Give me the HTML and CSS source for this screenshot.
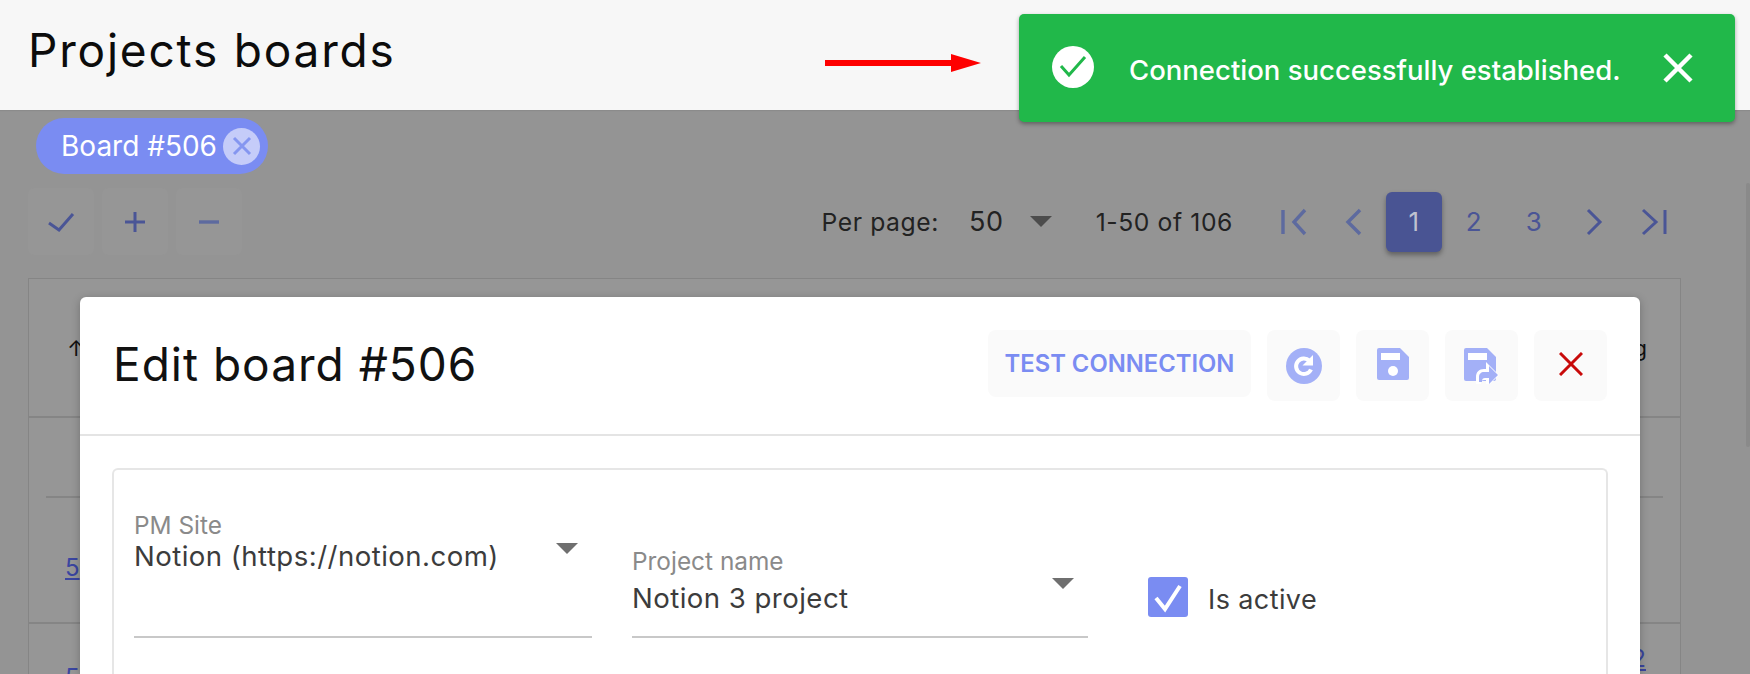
FILE: index.html
```html
<!DOCTYPE html>
<html lang="en">
<head>
<meta charset="utf-8">
<title>Projects boards</title>
<link rel="stylesheet" href="styles.css">
</head>
<body>
<header class="page-header"><h1 class="page-title">Projects boards</h1></header>
<main class="page-main">
  <div class="chips">
    <span class="chip">Board #506
      <span class="chip-x"><svg viewBox="0 0 24 24" width="24" height="24"><path d="M4 4l16 16M20 4L4 20" class="chip-x-path"/></svg></span>
    </span>
  </div>
  <div class="toolbar">
    <div class="tool-group">
      <button class="tool-btn"><svg viewBox="0 0 30 30" width="30" height="30"><path d="M3 16l10 7L27 7" class="stroke"/></svg></button>
      <button class="tool-btn"><svg viewBox="0 0 30 30" width="30" height="30"><path d="M15 5v20M5 15h20" class="stroke"/></svg></button>
      <button class="tool-btn"><svg viewBox="0 0 30 30" width="30" height="30"><path d="M5 15h20" class="stroke faint"/></svg></button>
    </div>
    <div class="pager">
      <span class="per-label">Per page:</span>
      <span class="per-value">50</span>
      <span class="caret caret-dark"></span>
      <span class="range">1-50 of 106</span>
      <span class="pg"><svg viewBox="0 0 30 30" width="30" height="30"><path d="M4 3v24M26 3L15 15l11 12" class="stroke faint"/></svg></span>
      <span class="pg"><svg viewBox="0 0 30 30" width="30" height="30"><path d="M21 3L9 15l12 12" class="stroke faint"/></svg></span>
      <span class="pg pg-on">1</span>
      <span class="pg">2</span>
      <span class="pg">3</span>
      <span class="pg"><svg viewBox="0 0 30 30" width="30" height="30"><path d="M9 3l12 12L9 27" class="stroke"/></svg></span>
      <span class="pg"><svg viewBox="0 0 30 30" width="30" height="30"><path d="M4 3l13 12L4 27M26 3v24" class="stroke"/></svg></span>
    </div>
  </div>
  <div class="table-box">
    <div class="thead"><span class="sort-arrow">↑</span><span class="th-end">g</span></div>
    <div class="row-empty"><div class="row-rule"></div></div>
    <div class="row-data"><a class="cell-link">5</a></div>
    <div class="row-data row-last"><a class="cell-link">5</a><a class="cell-link cell-raised">2</a></div>
  </div>
</main>

<div class="scroll-thumb"></div>

<svg class="annot-arrow" viewBox="0 0 156 18" width="156" height="18"><path d="M0 6h126V0l30 9-30 9v-6H0z" fill="#fe0000"/></svg>

<div class="toast">
  <svg class="toast-icon" viewBox="0 0 42 42" width="42" height="42"><circle cx="21" cy="21" r="21" fill="#fff"/><path d="M9 20l8 9 16-18" fill="none" stroke="#21b84a" stroke-width="3"/></svg>
  <span class="toast-text">Connection successfully established.</span>
  <svg class="toast-close" viewBox="0 0 30 30" width="30" height="30"><path d="M2 2l26 26M28 2L2 28" fill="none" stroke="#fff" stroke-width="4.5"/></svg>
</div>

<section class="modal">
  <div class="modal-head">
    <h2 class="modal-title">Edit board #506</h2>
    <div class="modal-actions">
      <button class="action action-text">TEST CONNECTION</button>
      <button class="action action-icon">
        <svg viewBox="0 0 36 36" width="36" height="36"><circle cx="18" cy="18" r="18" fill="#a3b0f7"/><path d="M25 21.5a7.8 7.8 0 1 1-1.6-8.8" fill="none" stroke="#fff" stroke-width="4"/><path d="M27 7v10.5h-10.5z" fill="#fff"/></svg>
      </button>
      <button class="action action-icon">
        <svg class="icon-up" viewBox="0 0 32 32" width="32" height="32"><path d="M2 0h21l9 9v21a2 2 0 0 1-2 2H2a2 2 0 0 1-2-2V2a2 2 0 0 1 2-2z" fill="#a3b0f7"/><rect x="4" y="5" width="19" height="7" fill="#fff"/><circle cx="16" cy="23" r="5" fill="#fff"/></svg>
      </button>
      <button class="action action-icon">
        <svg viewBox="0 0 35 36" width="35" height="36"><path d="M2 0h21l9 9v22a2 2 0 0 1-2 2H2a2 2 0 0 1-2-2V2a2 2 0 0 1 2-2z" fill="#a3b0f7"/><rect x="4" y="5" width="19" height="7" fill="#fff"/><path d="M12 36v-7c0-5 3-8 8-8h2v-7l13 13-13 13v-8h-2c-2 0-3 1-3 3v1z" fill="#fff"/><path d="M15 34v-5c0-3 2-5 5-5h5v-6l9 9-9 9v-6h-4c-2 0-3 1-3 3v1z" fill="#a3b0f7"/></svg>
      </button>
      <button class="action action-icon">
        <svg class="icon-up" viewBox="0 0 24 24" width="24" height="24"><path d="M1 1l22 22M23 1L1 23" fill="none" stroke="#c80a0a" stroke-width="3"/></svg>
      </button>
    </div>
  </div>
  <div class="modal-body">
    <div class="form-card">
      <div class="field field-site">
        <label class="field-label">PM Site</label>
        <div class="field-value">Notion (https://notion.com)</div>
        <span class="caret caret-field"></span>
      </div>
      <div class="field field-project">
        <label class="field-label">Project name</label>
        <div class="field-value">Notion 3 project</div>
        <span class="caret caret-field"></span>
      </div>
      <div class="check-field">
        <span class="check-box"><svg viewBox="0 0 40 40" width="40" height="40"><path d="M8 21l9 11L32 9" fill="none" stroke="#fff" stroke-width="4"/></svg></span>
        <span class="check-label">Is active</span>
      </div>
    </div>
  </div>
</section>
</body>
</html>
```
FILE: styles.css
```css
* { box-sizing: border-box; }
html, body { margin: 0; height: 100%; }
body {
  position: relative;
  width: 1750px;
  height: 674px;
  overflow: hidden;
  background: #949494;
  font-family: Inter, "Liberation Sans", sans-serif;
  color: #1c1c1c;
}
.page-header {
  height: 110px;
  background: #f7f7f7;
  padding: 0 28px;
  display: flex;
  align-items: center;
  box-shadow: 0 1px 1px rgba(0,0,0,.06);
}
.page-title {
  margin: 0 0 10px;
  font-size: 46px;
  font-weight: 400;
  color: #0c0c0c;
  letter-spacing: 1.8px;
}
.page-main { padding: 8px 28px 0; }
.chips { display: flex; height: 56px; padding-left: 8px; }
.chip {
  display: flex;
  align-items: center;
  height: 56px;
  width: 232px;
  padding: 0 8px 0 25px;
  background: #7a8cf2;
  color: #fff;
  font-size: 28px;
  border-radius: 28px;
  justify-content: space-between;
}
.chip-x {
  width: 37px;
  height: 37px;
  border-radius: 50%;
  background: #c5ccf9;
  display: flex;
  align-items: center;
  justify-content: center;
}
.chip-x-path { fill: none; stroke: #8596f0; stroke-width: 3; }
.toolbar {
  display: flex;
  justify-content: space-between;
  align-items: center;
  height: 67px;
  margin-top: 14px;
}
.tool-group { display: flex; gap: 8px; }
.tool-btn {
  width: 66px;
  height: 67px;
  border: 0;
  border-radius: 6px;
  background: #969696;
  padding: 0;
  display: flex;
  align-items: center;
  justify-content: center;
}
.stroke { fill: none; stroke: #4a5596; stroke-width: 3; }
.stroke.faint { stroke: #5d6a9f; stroke-width: 3.4; }
.pager {
  display: flex;
  align-items: center;
  font-size: 24.7px;
  padding-right: 38px;
  color: #222;
  letter-spacing: .6px;
}
.per-label { margin-right: 30px; }
.per-value { margin-right: 26px; font-size: 27px; }
.caret {
  display: inline-block;
  width: 0;
  height: 0;
  border-left: 11px solid transparent;
  border-right: 11px solid transparent;
  border-top: 11px solid #4c4c4c;
}
.caret-dark { margin-right: 44px; }
.range { margin-right: 31px; }
.pg {
  width: 60px;
  height: 60px;
  display: flex;
  align-items: center;
  justify-content: center;
  color: #4a5596;
  font-size: 26px;
}
.pg-on {
  width: 56px;
  margin: 0 2px;
  border-radius: 6px;
  background: #495493;
  color: #bfc2cf;
  box-shadow: 0 3px 5px rgba(0,0,0,.35);
}
.table-box {
  margin-top: 23px;
  width: 1653px;
  height: 396px;
  overflow: hidden;
  background: #969696;
  border: 1px solid #858585;
  border-bottom: 0;
}
.thead {
  height: 139px;
  border-bottom: 2px solid #858585;
  display: flex;
  justify-content: space-between;
  align-items: center;
  padding: 0 33px 0 38px;
  font-size: 22px;
  color: #111;
}
.row-empty { height: 80px; padding: 0 17px; display: flex; align-items: flex-end; }
.row-rule { width: 100%; height: 2px; background: #858585; }
.row-data {
  height: 126px;
  border-bottom: 2px solid #858585;
  display: flex;
  justify-content: space-between;
  align-items: flex-start;
  padding: 55px 34px 0 36px;
}
.row-last { padding-top: 39px; }
.cell-link { font-size: 24px; color: #3a45a0; text-decoration: underline; }
.cell-raised { margin-top: -19px; }
.scroll-thumb {
  position: absolute;
  right: 0;
  top: 183px;
  width: 4px;
  height: 264px;
  background: #8a8a8a;
  border-radius: 2px;
}
.annot-arrow { position: absolute; left: 825px; top: 54px; }
.toast {
  position: absolute;
  left: 1019px;
  top: 14px;
  width: 716px;
  height: 108px;
  display: flex;
  align-items: center;
  padding: 0 42px 0 33px;
  background: #21b84a;
  border-radius: 5px;
  box-shadow: 0 2px 4px rgba(0,0,0,.35);
  color: #fff;
}
.toast-icon { margin-bottom: 2px; }
.toast-text { margin: 4px 0 0 35px; font-size: 27.5px; font-weight: 500; flex: 1; white-space: nowrap; }
.toast-close { margin-bottom: 1px; }
.modal {
  position: absolute;
  left: 80px;
  top: 297px;
  width: 1560px;
  height: 377px;
  background: #fff;
  border-radius: 6px 6px 0 0;
  box-shadow: 0 2px 8px rgba(0,0,0,.25);
}
.modal-head {
  height: 139px;
  border-bottom: 2px solid #e4e4e4;
  display: flex;
  justify-content: space-between;
  padding: 33px 33px 0;
}
.modal-title {
  margin: 6px 0 0;
  font-size: 46px;
  font-weight: 400;
  color: #111;
  letter-spacing: 1px;
}
.modal-actions { display: flex; align-items: flex-start; gap: 16px; }
.action {
  border: 0;
  background: #fafafa;
  border-radius: 8px;
  padding: 0;
  display: flex;
  align-items: center;
  justify-content: center;
  font-family: inherit;
}
.action-text {
  width: 263px;
  height: 67px;
  color: #7a8cf2;
  font-size: 23.8px;
  font-weight: 600;
}
.action-icon { width: 73px; height: 71px; }
.icon-up { margin-bottom: 3px; }
.modal-body { padding: 32px 32px 0; }
.form-card {
  height: 206px;
  border: 2px solid #e6e6e6;
  border-bottom: 0;
  border-radius: 6px 6px 0 0;
  display: flex;
  align-items: flex-start;
  padding: 0 20px;
}
.field {
  position: relative;
  height: 168px;
  border-bottom: 2px solid #c8c8c8;
  margin-right: 40px;
}
.field-site { width: 458px; padding-top: 40px; }
.field-project { width: 456px; padding-top: 76px; }
.field-label { display: block; font-size: 24.4px; color: #8a8a8a; white-space: nowrap; }
.field-value { font-size: 27.6px; color: #3c3c3c; letter-spacing: .45px; white-space: nowrap; margin-top: -1px; }
.field-project .field-value { margin-top: 5px; }
.caret-field { position: absolute; right: 14px; border-top-color: #6f6f6f; }
.field-site .caret-field { top: 73px; }
.field-project .caret-field { top: 108px; }
.check-field {
  display: flex;
  align-items: center;
  gap: 20px;
  margin: 107px 0 0 20px;
}
.check-box {
  width: 40px;
  height: 40px;
  border-radius: 3px;
  background: #7a8cf2;
  display: flex;
}
.check-label { font-size: 27px; color: #3c3c3c; letter-spacing: .4px; margin-top: 4px; }
```
